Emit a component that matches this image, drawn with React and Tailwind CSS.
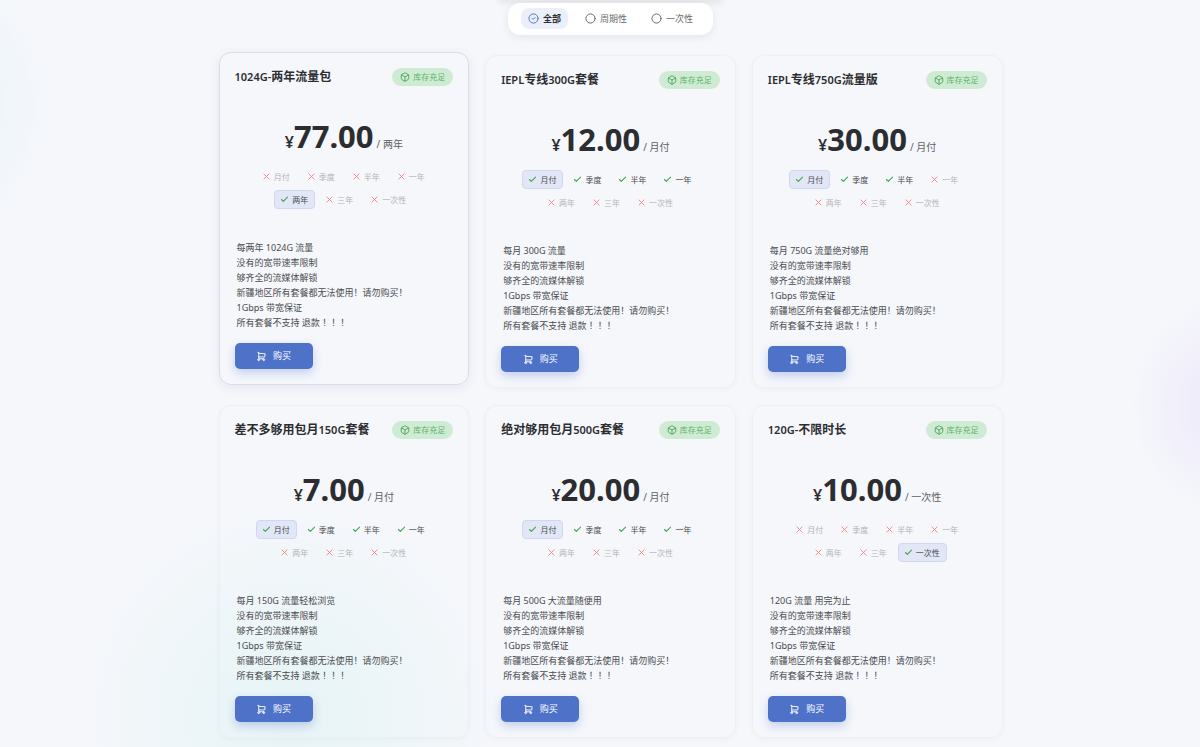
import { useState } from 'react'
import { Box, Check, Circle, CircleCheck, X } from 'lucide-react'
import { TbShoppingCart } from 'react-icons/tb'

const filters = ['全部', '周期性', '一次性']
const periods = ['月付', '季度', '半年', '一年', '两年', '三年', '一次性']

const common = ['没有的宽带速率限制', '够齐全的流媒体解锁']
const region = '新疆地区所有套餐都无法使用！请勿购买！'
const bandwidth = '1Gbps 带宽保证'
const refund = '所有套餐不支持 退款 ！！！'

const plans = [
  {
    id: 1,
    name: '1024G-两年流量包',
    price: '77.00',
    period: '两年',
    available: ['两年'],
    features: ['每两年 1024G 流量', ...common, region, bandwidth, refund],
    raised: true,
  },
  {
    id: 2,
    name: 'IEPL专线300G套餐',
    price: '12.00',
    period: '月付',
    available: ['月付', '季度', '半年', '一年'],
    features: ['每月 300G 流量', ...common, bandwidth, region, refund],
  },
  {
    id: 3,
    name: 'IEPL专线750G流量版',
    price: '30.00',
    period: '月付',
    available: ['月付', '季度', '半年'],
    features: ['每月 750G 流量绝对够用', ...common, bandwidth, region, refund],
  },
  {
    id: 4,
    name: '差不多够用包月150G套餐',
    price: '7.00',
    period: '月付',
    available: ['月付', '季度', '半年', '一年'],
    features: ['每月 150G 流量轻松浏览', ...common, bandwidth, region, refund],
  },
  {
    id: 5,
    name: '绝对够用包月500G套餐',
    price: '20.00',
    period: '月付',
    available: ['月付', '季度', '半年', '一年'],
    features: ['每月 500G 大流量随便用', ...common, bandwidth, region, refund],
  },
  {
    id: 6,
    name: '120G-不限时长',
    price: '10.00',
    period: '一次性',
    available: ['一次性'],
    features: ['120G 流量 用完为止', ...common, bandwidth, region, refund],
  },
]

const FilterBar = ({ active, onChange }) => (
  <nav className="flex gap-[10px] rounded-xl bg-white px-[13px] pt-[5px] pb-[6px] shadow-[0_2px_8px_rgba(0,0,0,0.08)]">
    {filters.map(name => {
      const selected = name === active
      const Icon = selected ? CircleCheck : Circle
      return (
        <button
          key={name}
          type="button"
          aria-pressed={selected}
          onClick={() => onChange(name)}
          className={`flex h-[21px] items-center gap-1 rounded-lg px-[7px] text-[9px] ${
            selected ? 'bg-[#ebeff9] font-bold text-[#2c2d30]' : 'text-[#6b6c70]'
          }`}
        >
          <Icon size={11} strokeWidth={2} className={selected ? 'text-[#4c6cc4]' : 'text-[#5c5d61]'} />
          {name}
        </button>
      )
    })}
  </nav>
)

// Latin runs are set a little smaller and lighter than the Chinese ones
const PlanName = ({ name }) => (
  <h2 className="text-[12px] leading-[18px] font-bold text-[#2c2d30]">
    {name.split(/([A-Za-z0-9-]+)/).map((part, i) =>
      i % 2 ? <span key={i} className="text-[11px] font-semibold">{part}</span> : part
    )}
  </h2>
)

const PeriodChip = ({ name, available, selected, onSelect }) => (
  <button
    type="button"
    disabled={!available}
    aria-pressed={selected}
    onClick={onSelect}
    className={`flex h-[19px] items-center gap-1 rounded border px-[6px] text-[8px] ${
      selected ? 'border-[#cfd8f0] bg-[#e1e7f6]' : 'border-transparent'
    } ${available ? 'text-[#4a4b4f]' : 'text-[#b4b5b9]'}`}
  >
    {available ? (
      <Check size={7} viewBox="3 3 18 18" strokeWidth={3} className="text-[#45a857]" />
    ) : (
      <X size={7} viewBox="4 4 16 16" strokeWidth={2} className="text-[#f08080]" />
    )}
    {name}
  </button>
)

const PlanCard = ({ plan }) => {
  const [period, setPeriod] = useState(plan.period)

  return (
    <article
      className={`flex flex-col rounded-xl border p-[15px] ${
        plan.raised
          ? '-translate-y-[3px] border-[#dadbe9] shadow-[0_3px_12px_rgba(40,50,90,0.08)]'
          : 'border-[#eeeff3] shadow-[0_1px_5px_rgba(0,0,0,0.04)]'
      }`}
    >
      <header className="flex items-center justify-between">
        <PlanName name={plan.name} />
        <span className="flex h-[18px] items-center gap-[3px] rounded-full bg-[#d0ebd4] px-2 text-[8px] text-[#5bb568]">
          <Box size={10} strokeWidth={2} className="text-[#3fa04f]" />
          库存充足
        </span>
      </header>

      <p className="mt-[31px] flex items-baseline justify-center leading-[38px] text-[#2c2d30]">
        <span className="text-[16px] font-semibold">¥</span>
        <span className="text-[31px] font-bold">{plan.price}</span>
        <span className="ml-[3px] text-[10px] text-[#5f6064]">/ {period}</span>
      </p>

      <div className="mt-1 flex flex-wrap justify-center gap-1">
        {periods.map(name => (
          <PeriodChip
            key={name}
            name={name}
            available={plan.available.includes(name)}
            selected={name === period}
            onSelect={() => setPeriod(name)}
          />
        ))}
      </div>

      <ul className="mt-[31px] px-[2px] text-[9px] leading-[15px] text-[#4a4b4f]">
        {plan.features.map(feature => (
          <li key={feature}>{feature}</li>
        ))}
      </ul>

      <button
        type="button"
        className="mt-[13px] flex h-[26px] w-[78px] items-center justify-center gap-[6px] rounded-[5px] bg-[#4f72c9] text-[9px] text-white shadow-[0_4px_10px_rgba(79,114,201,0.3)] hover:bg-[#6183d6]"
      >
        <TbShoppingCart size={11} />
        购买
      </button>
    </article>
  )
}

export default function App() {
  const [active, setActive] = useState('全部')

  const visible = plans.filter(plan => {
    if (active === '全部') return true
    return (active === '一次性') === (plan.period === '一次性')
  })

  return (
    <div className="min-h-screen overflow-hidden bg-[#f5f7fb] bg-[radial-gradient(circle_at_290px_715px,#e6f4f5,transparent_210px),radial-gradient(circle_at_-100px_105px,#e2f2f5,transparent_150px),radial-gradient(circle_at_1240px_405px,#ece5fb,transparent_110px)] pl-[21px] font-['Noto_Sans','Noto_Sans_CJK_SC',sans-serif]">
      <div className="mx-auto h-0 w-[220px] shadow-[0_0_6px_2px_rgba(0,0,0,0.12)]" />
      <div className="flex justify-center pt-[3px]">
        <FilterBar active={active} onChange={setActive} />
      </div>
      <main className="mx-auto mt-5 grid max-w-[784px] grid-cols-1 gap-x-4 gap-y-[17px] pb-2 sm:grid-cols-2 md:grid-cols-3">
        {visible.map(plan => (
          <PlanCard key={plan.id} plan={plan} />
        ))}
      </main>
    </div>
  )
}
